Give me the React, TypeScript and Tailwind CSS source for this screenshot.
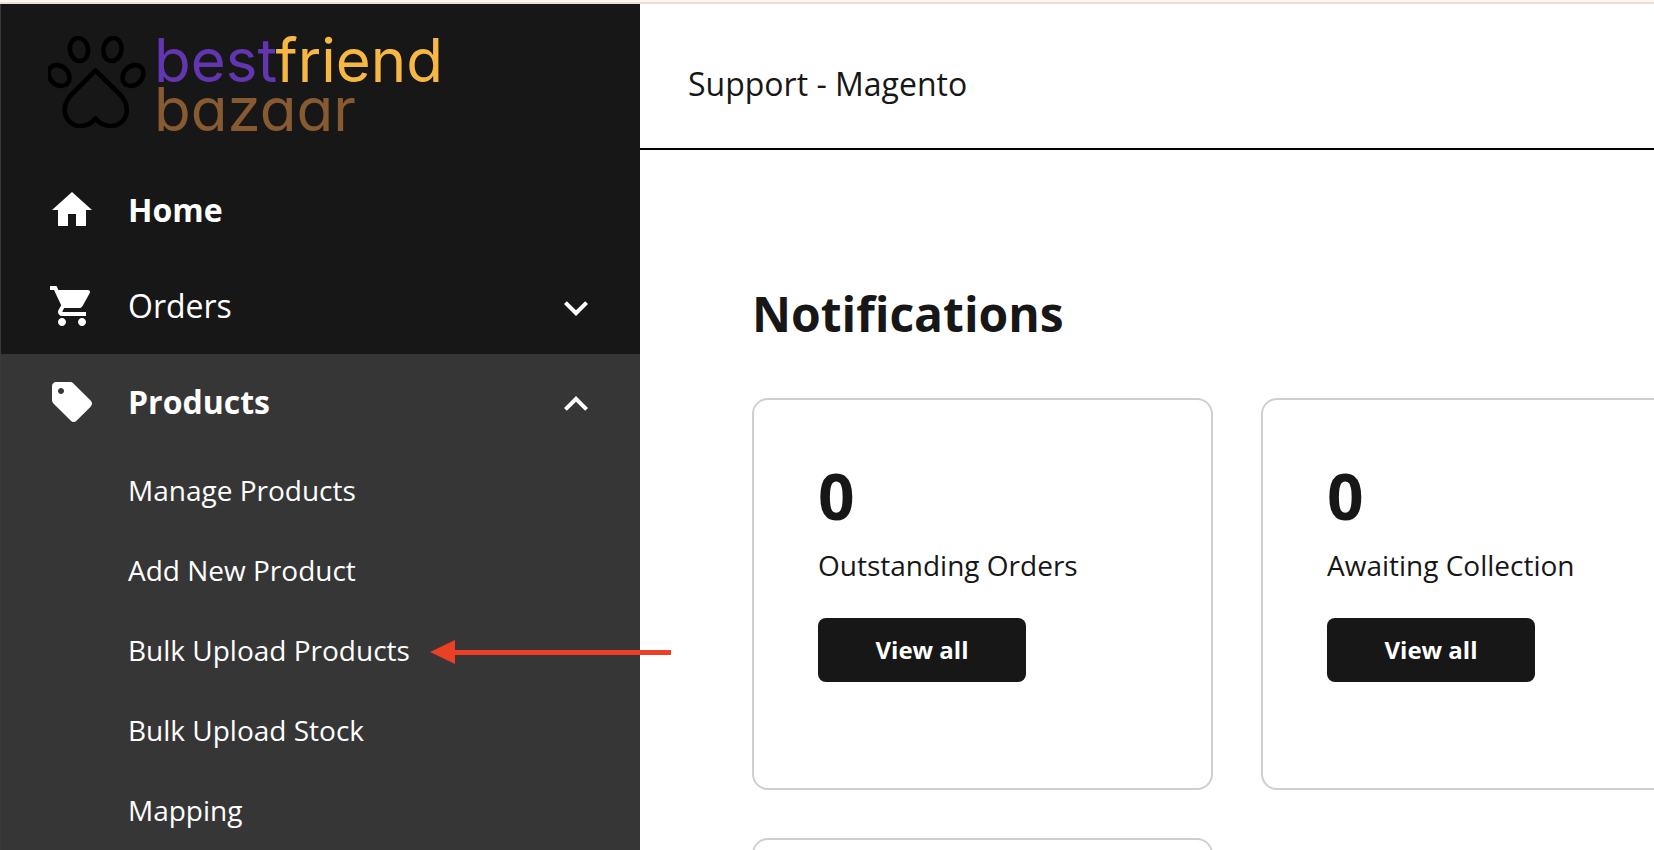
import { MdExpandLess, MdExpandMore, MdHome, MdSell, MdShoppingCart } from "react-icons/md";

const productLinks = [
  "Manage Products",
  "Add New Product",
  "Bulk Upload Products",
  "Bulk Upload Stock",
  "Mapping",
];

const notifications = [
  { count: 0, label: "Outstanding Orders" },
  { count: 0, label: "Awaiting Collection" },
  { count: 0, label: "Returns" },
];

function Logo() {
  return (
    <a href="#home" className="flex h-[94px] items-start gap-2" aria-label="bestfriend bazaar">
      <svg
        viewBox="0 0 98 94"
        className="h-[94px] w-[98px] shrink-0"
        fill="none"
        stroke="#000"
        strokeWidth="4.6"
        strokeLinejoin="round"
      >
        <ellipse cx="31" cy="13.5" rx="9" ry="11.6" transform="rotate(-10 31 13.5)" />
        <ellipse cx="64.5" cy="13.5" rx="9" ry="11.6" transform="rotate(10 64.5 13.5)" />
        <ellipse cx="11" cy="39.5" rx="9.2" ry="11.6" transform="rotate(-45 11 39.5)" />
        <ellipse cx="85" cy="39.5" rx="9.2" ry="11.6" transform="rotate(45 85 39.5)" />
        <path d="M47.500 34.500 24 58C19 63 16.700 68 16.700 74c0 9 7 16 15.800 16 6 0 11-2.500 15-7.500C51.500 87.500 57 90 62.800 90c9 0 16-7 16-16 0-6-2.300-11-7.300-16Z" />
      </svg>
      <span className="font-['Inter',sans-serif] text-6xl leading-[49px] font-normal [font-feature-settings:'cv11']">
        <span className="block whitespace-nowrap">
          <span className="text-[#6236b0]">best</span>
          <span className="text-[#f7b843]">friend</span>
        </span>
        <span className="block text-[#875a32]">bazaar</span>
      </span>
    </a>
  );
}

function Pointer() {
  return (
    <svg
      viewBox="0 -4 241 28"
      className="pointer-events-none absolute top-1/2 left-full z-10 ml-5 h-7 w-[241px] -translate-y-1/2"
      fill="#eb4026"
      aria-hidden="true"
    >
      <path d="M0 12 25 0v10h216v5H25v9Z" />
    </svg>
  );
}

function Sidebar() {
  return (
    <aside className="w-[640px] shrink-0 border-l border-[#3a3a3a] bg-[#171717] text-white">
      <div className="pt-8 pr-10 pb-8 pl-[47px]">
        <Logo />
      </div>
      <nav className="text-[32px]">
        <a href="#home" className="flex h-24 items-center gap-8 pr-10 pl-[47px] font-bold">
          <MdHome className="size-12" />
          Home
        </a>
        <button type="button" className="flex h-24 w-full items-center gap-8 pr-10 pl-[47px] text-left">
          <MdShoppingCart className="size-12" />
          <span className="flex-1">Orders</span>
          <MdExpandMore className="mt-1 size-12" />
        </button>
        <div className="bg-[#363636]">
          <button
            type="button"
            aria-expanded="true"
            className="flex h-24 w-full items-center gap-8 pr-10 pl-[47px] text-left font-bold"
          >
            <MdSell className="size-12" />
            <span className="flex-1">Products</span>
            <MdExpandLess className="mt-1 size-12" />
          </button>
          <ul className="pl-[127px] text-[28px]">
            {productLinks.map((label) => (
              <li key={label} className="flex h-20 items-center">
                <a href="#products" className="relative whitespace-nowrap">
                  {label}
                  {label === "Bulk Upload Products" && <Pointer />}
                </a>
              </li>
            ))}
          </ul>
        </div>
      </nav>
    </aside>
  );
}

export default function App() {
  return (
    <div className="h-screen overflow-hidden bg-white font-['Open_Sans',sans-serif] text-[#171717]">
      <div className="h-1 border-b-2 border-[#f0dfd5] bg-[#fdf6f2]" />
      <div className="flex">
        <Sidebar />
        <main className="min-w-0 flex-1">
          <header className="border-b-2 border-black px-12 pt-14 pb-10">
            <p className="text-[32px] leading-[48px]">Support - Magento</p>
          </header>
          <section className="pt-32 pl-28">
            <h1 className="mb-12 text-5xl leading-[72px] font-bold">Notifications</h1>
            <div className="grid grid-cols-[repeat(2,minmax(461px,1fr))] gap-12">
              {notifications.map(({ count, label }) => (
                <article key={label} className="rounded-2xl border-2 border-[#cfcfcf] px-16 pt-16 pb-[106px]">
                  <p className="text-[64px] leading-[64px] font-bold">{count}</p>
                  <p className="mt-4 text-[28px] leading-[42px]">{label}</p>
                  <button
                    type="button"
                    className="mt-8 h-16 w-52 rounded-lg bg-[#171717] text-2xl font-bold text-white"
                  >
                    View all
                  </button>
                </article>
              ))}
            </div>
          </section>
        </main>
      </div>
    </div>
  );
}
